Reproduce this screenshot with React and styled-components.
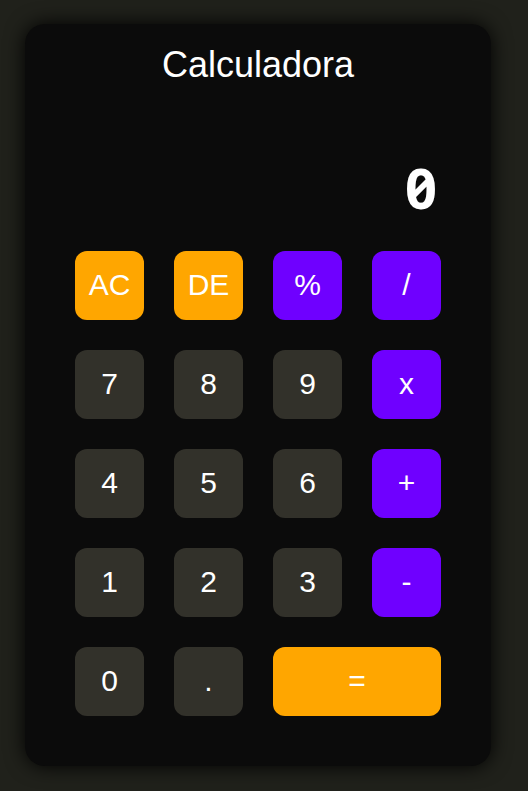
import React, { useState } from "react";
import styled, { createGlobalStyle } from "styled-components";

const GlobalStyle = createGlobalStyle`
  * { box-sizing: border-box; }
  body {
    margin: 0;
    background: #20211b;
    color: #ffffff;
    font-family: "Liberation Sans", Arial, sans-serif;
  }
`;

const Page = styled.main`
  min-height: 100vh;
  padding: 24px 37px 25px 25px;
`;

const Calculator = styled.section`
  max-width: 560px;
  margin: 0 auto;
  padding: 20px 50px 50px;
  border-radius: 20px;
  background: #0b0b0b;
  box-shadow: 0 0 20px #000000;
`;

const Title = styled.h1`
  margin: 0;
  font-size: 36px;
  font-weight: 400;
  line-height: 42px;
  text-align: center;
`;

const Display = styled.output`
  display: block;
  margin: 51px 0 13px;
  padding-right: 4px;
  overflow: hidden;
  font-family: "Noto Sans", sans-serif;
  font-feature-settings: "zero" 1;
  font-size: 56px;
  font-weight: 700;
  line-height: 101px;
  text-align: right;
`;

const Keys = styled.div`
  display: grid;
  grid-template-columns: repeat(4, 1fr);
  grid-auto-rows: 69px;
  gap: 30px;
`;

const tones = { digit: "#32312a", action: "#ffa600", operator: "#6f00ff" };

const Key = styled.button`
  grid-column: span ${(p) => p.$span || 1};
  padding: 0 0 2px;
  border: 0;
  border-radius: 12px;
  background: ${(p) => tones[p.$tone]};
  color: inherit;
  font-family: inherit;
  font-size: 30px;
  cursor: pointer;
`;

const keys = [
  ["AC", "action"], ["DE", "action"], ["%", "operator"], ["/", "operator"],
  ["7", "digit"], ["8", "digit"], ["9", "digit"], ["x", "operator"],
  ["4", "digit"], ["5", "digit"], ["6", "digit"], ["+", "operator"],
  ["1", "digit"], ["2", "digit"], ["3", "digit"], ["-", "operator"],
  ["0", "digit"], [".", "digit"], ["=", "action", 2],
];

const operations = {
  "+": (a, b) => a + b,
  "-": (a, b) => a - b,
  x: (a, b) => a * b,
  "/": (a, b) => a / b,
  "%": (a, b) => a % b,
};

const initial = { value: "0", stored: null, operator: null, fresh: true };

function press(state, key) {
  const { value, stored, operator, fresh } = state;
  if (key === "AC") return initial;
  if (key === "DE") return { ...state, value: value.slice(0, -1) || "0" };
  if (/\d/.test(key)) {
    return { ...state, value: fresh || value === "0" ? key : value + key, fresh: false };
  }
  if (key === ".") {
    if (fresh) return { ...state, value: "0.", fresh: false };
    return value.includes(".") ? state : { ...state, value: value + "." };
  }
  const result = operator && !fresh
    ? operations[operator](stored, Number(value))
    : Number(value);
  return {
    value: String(result),
    stored: result,
    operator: key === "=" ? null : key,
    fresh: true,
  };
}

export default function App() {
  const [state, setState] = useState(initial);
  return (
    <>
      <GlobalStyle />
      <Page>
        <Calculator aria-labelledby="title">
          <Title id="title">Calculadora</Title>
          <Display aria-labelledby="title">{state.value}</Display>
          <Keys>
            {keys.map(([label, tone, span]) => (
              <Key
                key={label}
                type="button"
                $tone={tone}
                $span={span}
                onClick={() => setState((s) => press(s, label))}
              >
                {label}
              </Key>
            ))}
          </Keys>
        </Calculator>
      </Page>
    </>
  );
}
